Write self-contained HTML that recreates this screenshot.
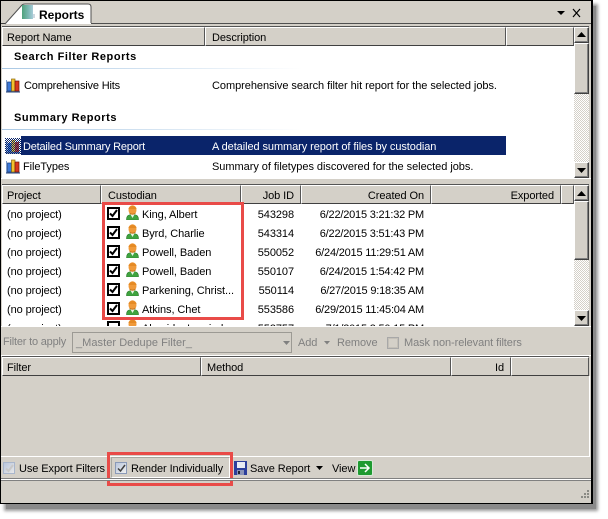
<!DOCTYPE html>
<html><head><meta charset="utf-8"><style>
html,body{margin:0;padding:0;width:608px;height:519px;overflow:hidden;background:#fff}
*{box-sizing:border-box}
body{font:11px/14px "Liberation Sans",sans-serif;color:#000;position:relative}
.a{position:absolute}
.t{position:absolute;white-space:nowrap;height:14px;margin-top:1px;letter-spacing:-.08px}
.r{text-align:right}
.d{letter-spacing:-.2px}
.b{font-weight:bold;letter-spacing:.55px}
.g{color:#808080}
.h{position:absolute;background:#d4d0c8;border-left:1px solid #fff;border-top:1px solid #fff;border-right:1px solid #555;border-bottom:1px solid #404040}
.track{background-color:#fff;background-image:conic-gradient(#d4d0c8 25%,#fff 0 50%,#d4d0c8 0 75%,#fff 0);background-size:2px 2px}
.btn{position:absolute;background:#d4d0c8;border-top:1px solid #fff;border-left:1px solid #fff;border-right:1px solid #404040;border-bottom:1px solid #404040;box-shadow:inset -1px -1px 0 #808080}
.cb{position:absolute;left:107px;width:13px;height:13px;border:2px solid #000;background:#fff}
</style></head><body>
<svg width="0" height="0" style="position:absolute"><defs>
<linearGradient id="bk" x1="0" x2="1" y1="0" y2="0"><stop offset="0" stop-color="#4fa27c"/><stop offset=".6" stop-color="#7db8b4"/><stop offset="1" stop-color="#a8ccd8"/></linearGradient>
<pattern id="dz" width="2" height="2" patternUnits="userSpaceOnUse"><rect width="1" height="1" fill="#0a246a"/><rect x="1" y="1" width="1" height="1" fill="#0a246a"/></pattern>
<symbol id="chart" viewBox="0 0 16 16"><path d="M1.500 3v11h13" fill="none" stroke="#7d9ccc"/><rect x="2.500" y="5" width="4" height="9" fill="#3b78d8" stroke="#123a80" stroke-width=".7"/><rect x="6.500" y="2" width="3.500" height="12" fill="#f2c22e" stroke="#8a6a10" stroke-width=".7"/><rect x="10" y="4" width="4" height="10" fill="#d8381e" stroke="#701808" stroke-width=".7"/><path d="M1 15h14" stroke="#22407a"/></symbol>
<symbol id="chartsel" viewBox="0 0 16 16"><path d="M1.500 3v11h13" fill="none" stroke="#7d9ccc"/><rect x="2.500" y="5" width="4" height="9" fill="#3b78d8"/><rect x="6.500" y="2" width="3.500" height="12" fill="#f2c22e"/><rect x="10" y="4" width="4" height="10" fill="#d8381e"/><path d="M1 15h14" stroke="#22407a"/><rect width="16" height="16" fill="url(#dz)"/></symbol>
<symbol id="p" viewBox="0 0 13 15"><path d="M.5 15c0-4 1.500-5.500 6-5.500s6 1.500 6 5.500z" fill="#3fa33f" stroke="#2a7a2a" stroke-width=".6"/><path d="M4.500 9.500h4l-2 3.500z" fill="#e8f4e8"/><ellipse cx="6.500" cy="5" rx="4" ry="4.800" fill="#f09a3a"/><path d="M2.500 4c0-3.800 8-3.800 8 0z" fill="#e58a24"/><path d="M3.500 8c1.500 1.500 4.500 1.500 6 0" fill="none" stroke="#c87820"/></symbol>
<symbol id="c" viewBox="0 0 9 9"><path d="M1 4.500l2.500 2.500 4.500-6" fill="none" stroke="#000" stroke-width="2"/></symbol>
</defs></svg>

<!-- shadow -->
<div class="a" style="left:6px;top:6px;width:590px;height:503px;background:#8a8a8a;box-shadow:0 0 3px 2px #9a9a9a"></div>
<!-- window -->
<div class="a" style="left:0;top:0;width:593px;height:504px;background:#d4d0c8;border:1px solid #000;border-width:1px 2px 1px 1px"></div>

<!-- tab -->
<svg class="a" style="left:0;top:0" width="100" height="26"><path d="M5 24L22 5Q23 4 25 4H88Q91 4 91 7V24z" fill="#fff"/><path d="M5 24L22 5Q23 4 25 4H88Q91 4 91 7V23" fill="none" stroke="#505050"/><rect x="22" y="5" width="11" height="14" fill="url(#bk)"/><rect x="33" y="14" width="2" height="4" fill="#cdd8e0"/></svg>
<div class="a" style="left:1px;top:23px;width:4px;height:1px;background:#404040"></div>
<div class="a" style="left:91px;top:23px;width:500px;height:1px;background:#505050"></div>
<div class="t b" style="left:39px;top:7px;font-size:12px;letter-spacing:0">Reports</div>
<svg class="a" style="left:556px;top:7px" width="28" height="12"><path d="M1 4h8L5 8z" fill="#000"/><path d="M17 2l7 8M24 2l-7 8" stroke="#000" stroke-width="1.200" fill="none"/></svg>

<!-- top pane -->
<div class="a" style="left:2px;top:26px;width:587px;height:1px;background:#555"></div>
<div class="h" style="left:2px;top:27px;width:203px;height:19px"></div>
<div class="h" style="left:205px;top:27px;width:301px;height:19px"></div>
<div class="h" style="left:506px;top:27px;width:68px;height:19px"></div>
<div class="t" style="left:7px;top:30px">Report Name</div>
<div class="t" style="left:212px;top:30px">Description</div>
<div class="a" style="left:2px;top:46px;width:572px;height:132px;background:#fff"></div>
<div class="t b" style="left:14px;top:49px;letter-spacing:.55px">Search Filter Reports</div>
<div class="a" style="left:2px;top:68px;width:300px;height:1px;background:linear-gradient(90deg,#a9c8e4,#fff)"></div>
<svg class="a" style="left:5px;top:77px" width="16" height="16"><use href="#chart"/></svg>
<div class="t" style="left:24px;top:78px;letter-spacing:-.17px">Comprehensive Hits</div>
<div class="t" style="left:212px;top:78px;letter-spacing:-.05px">Comprehensive search filter hit report for the selected jobs.</div>
<div class="t b" style="left:14px;top:110px;letter-spacing:.55px">Summary Reports</div>
<div class="a" style="left:2px;top:129px;width:300px;height:1px;background:linear-gradient(90deg,#a9c8e4,#fff)"></div>
<svg class="a" style="left:5px;top:138px" width="16" height="16"><use href="#chartsel"/></svg>
<div class="a" style="left:21px;top:136px;width:485px;height:19px;background:#0a246a"></div>
<div class="t" style="left:23px;top:139px;color:#fff;letter-spacing:-.2px">Detailed Summary Report</div>
<div class="t" style="left:212px;top:139px;color:#fff">A detailed summary report of files by custodian</div>
<svg class="a" style="left:5px;top:158px" width="16" height="16"><use href="#chart"/></svg>
<div class="t" style="left:23px;top:159px">FileTypes</div>
<div class="t" style="left:212px;top:159px;letter-spacing:-.04px">Summary of filetypes discovered for the selected jobs.</div>

<!-- top scrollbar -->
<div class="a track" style="left:574px;top:27px;width:15px;height:151px"></div>
<div class="btn" style="left:574px;top:27px;width:15px;height:16px"></div>
<svg class="a" style="left:577px;top:32px" width="9" height="5"><path d="M4.500 0L9 5H0z" fill="#000"/></svg>
<div class="btn" style="left:574px;top:43px;width:15px;height:51px"></div>
<div class="btn" style="left:574px;top:162px;width:15px;height:16px"></div>
<svg class="a" style="left:577px;top:168px" width="9" height="5"><path d="M0 0h9L4.500 5z" fill="#000"/></svg>

<div class="a" style="left:1px;top:178px;width:590px;height:1px;background:#fff"></div>
<div class="a" style="left:2px;top:184px;width:587px;height:1px;background:#555"></div>

<!-- middle pane -->
<div class="h" style="left:2px;top:185px;width:99px;height:19px"></div>
<div class="h" style="left:101px;top:185px;width:140px;height:19px"></div>
<div class="h" style="left:241px;top:185px;width:60px;height:19px"></div>
<div class="h" style="left:301px;top:185px;width:130px;height:19px"></div>
<div class="h" style="left:431px;top:185px;width:130px;height:19px"></div>
<div class="h" style="left:561px;top:185px;width:13px;height:19px"></div>
<div class="t" style="left:7px;top:188px">Project</div>
<div class="t" style="left:108px;top:188px">Custodian</div>
<div class="t r" style="right:314px;top:188px">Job ID</div>
<div class="t r" style="right:184px;top:188px">Created On</div>
<div class="t r" style="right:54px;top:188px">Exported</div>
<div class="a" style="left:2px;top:204px;width:572px;height:122px;background:#fff;overflow:hidden" id="m">
 <div class="t" style="left:5px;top:3px">(no project)</div><div class="t" style="left:5px;top:22px">(no project)</div><div class="t" style="left:5px;top:41px">(no project)</div><div class="t" style="left:5px;top:60px">(no project)</div><div class="t" style="left:5px;top:79px">(no project)</div><div class="t" style="left:5px;top:98px">(no project)</div><div class="t" style="left:5px;top:117px">(no project)</div>
 <div class="t" style="left:140px;top:3px">King, Albert</div><div class="t" style="left:140px;top:22px">Byrd, Charlie</div><div class="t" style="left:140px;top:41px">Powell, Baden</div><div class="t" style="left:140px;top:60px">Powell, Baden</div><div class="t" style="left:140px;top:79px">Parkening, Christ...</div><div class="t" style="left:140px;top:98px">Atkins, Chet</div><div class="t" style="left:140px;top:117px">Almeida, Laurindo</div>
 <div class="t r" style="right:280px;top:3px">543298</div><div class="t r" style="right:280px;top:22px">543314</div><div class="t r" style="right:280px;top:41px">550052</div><div class="t r" style="right:280px;top:60px">550107</div><div class="t r" style="right:280px;top:79px">550114</div><div class="t r" style="right:280px;top:98px">553586</div><div class="t r" style="right:280px;top:117px">553757</div>
 <div class="t r d" style="right:150px;top:3px">6/22/2015 3:21:32 PM</div><div class="t r d" style="right:150px;top:22px">6/22/2015 3:51:43 PM</div><div class="t r d" style="right:150px;top:41px">6/24/2015 11:29:51 AM</div><div class="t r d" style="right:150px;top:60px">6/24/2015 1:54:42 PM</div><div class="t r d" style="right:150px;top:79px">6/27/2015 9:18:35 AM</div><div class="t r d" style="right:150px;top:98px">6/29/2015 11:45:04 AM</div><div class="t r d" style="right:150px;top:117px">7/1/2015 3:50:15 PM</div>
</div>
<div class="cb" style="top:207px"><svg class="a" style="left:0;top:0" width="9" height="9"><use href="#c"/></svg></div>
<div class="cb" style="top:226px"><svg class="a" style="left:0;top:0" width="9" height="9"><use href="#c"/></svg></div>
<div class="cb" style="top:245px"><svg class="a" style="left:0;top:0" width="9" height="9"><use href="#c"/></svg></div>
<div class="cb" style="top:264px"><svg class="a" style="left:0;top:0" width="9" height="9"><use href="#c"/></svg></div>
<div class="cb" style="top:283px"><svg class="a" style="left:0;top:0" width="9" height="9"><use href="#c"/></svg></div>
<div class="cb" style="top:302px"><svg class="a" style="left:0;top:0" width="9" height="9"><use href="#c"/></svg></div>
<div class="a" style="left:107px;top:321px;width:13px;height:5px;border:2px solid #000;border-bottom:0;background:#fff"></div>
<svg class="a" style="left:126px;top:205px" width="13" height="15"><use href="#p"/></svg>
<svg class="a" style="left:126px;top:224px" width="13" height="15"><use href="#p"/></svg>
<svg class="a" style="left:126px;top:243px" width="13" height="15"><use href="#p"/></svg>
<svg class="a" style="left:126px;top:262px" width="13" height="15"><use href="#p"/></svg>
<svg class="a" style="left:126px;top:281px" width="13" height="15"><use href="#p"/></svg>
<svg class="a" style="left:126px;top:300px" width="13" height="15"><use href="#p"/></svg>
<div class="a" style="left:126px;top:319px;width:13px;height:7px;overflow:hidden"><svg width="13" height="15"><use href="#p"/></svg></div>
<!-- red box -->
<div class="a" style="left:102px;top:202px;width:142px;height:118px;border:3px solid #e94b48"></div>

<!-- middle scrollbar -->
<div class="a track" style="left:574px;top:185px;width:15px;height:141px"></div>
<div class="btn" style="left:574px;top:185px;width:15px;height:16px"></div>
<svg class="a" style="left:577px;top:191px" width="9" height="5"><path d="M4.500 0L9 5H0z" fill="#000"/></svg>
<div class="btn" style="left:574px;top:201px;width:15px;height:59px"></div>
<div class="btn" style="left:574px;top:310px;width:15px;height:16px"></div>
<svg class="a" style="left:577px;top:316px" width="9" height="5"><path d="M0 0h9L4.500 5z" fill="#000"/></svg>
<div class="a" style="left:1px;top:326px;width:590px;height:1px;background:#fff"></div>

<!-- filter toolbar -->
<div class="t g" style="left:3px;top:334px;letter-spacing:-.2px">Filter to apply</div>
<div class="a" style="left:72px;top:332px;width:220px;height:21px;border:1px solid #9c9a94"></div>
<div class="t g" style="left:76px;top:335px;letter-spacing:.05px">_Master Dedupe Filter_</div>
<svg class="a" style="left:283px;top:341px" width="8" height="5"><path d="M0 0h7L3.500 4z" fill="#808080"/></svg>
<div class="t g" style="left:298px;top:335px">Add</div>
<svg class="a" style="left:324px;top:341px" width="7" height="4"><path d="M0 0h6L3 3.500z" fill="#808080"/></svg>
<div class="t g" style="left:337px;top:335px">Remove</div>
<div class="a" style="left:387px;top:337px;width:12px;height:12px;background:#d4d0c8;border:1px solid #a8a8a8;box-shadow:inset 0 0 0 1px #c4c0b8"></div>
<div class="t g" style="left:404px;top:335px">Mask non-relevant filters</div>

<!-- bottom pane -->
<div class="a" style="left:1px;top:355px;width:590px;height:1px;background:#fff"></div>
<div class="a" style="left:2px;top:356px;width:587px;height:1px;background:#555"></div>
<div class="h" style="left:2px;top:357px;width:199px;height:19px"></div>
<div class="h" style="left:201px;top:357px;width:250px;height:19px"></div>
<div class="h" style="left:451px;top:357px;width:60px;height:19px"></div>
<div class="h" style="left:511px;top:357px;width:78px;height:19px"></div>
<div class="t" style="left:7px;top:360px">Filter</div>
<div class="t" style="left:207px;top:360px">Method</div>
<div class="t r" style="right:104px;top:360px">Id</div>
<div class="a" style="left:1px;top:456px;width:589px;height:1px;background:#fff"></div>
<div class="a" style="left:589px;top:376px;width:1px;height:81px;background:#fff"></div>

<!-- bottom toolbar -->
<div class="a" style="left:3px;top:462px;width:12px;height:12px;background:linear-gradient(135deg,#b9c6dc,#e8e8e8);border:1px solid #a9b6cc"></div>
<svg class="a" style="left:5px;top:464px" width="9" height="9"><path d="M1 4.500l2.500 2.500 4.500-6" fill="none" stroke="#c8c8c8" stroke-width="2"/></svg>
<div class="t" style="left:19px;top:461px;letter-spacing:-.08px">Use Export Filters</div>
<div class="a" style="left:111px;top:457px;width:119px;height:21px;border:1px solid #a8a8a0;border-right-color:#fff;border-bottom-color:#fff"></div>
<div class="a" style="left:115px;top:462px;width:12px;height:12px;background:linear-gradient(135deg,#b9c6dc,#f0f0f0);border:1px solid #8a9ab8"></div>
<svg class="a" style="left:117px;top:464px" width="9" height="9"><path d="M1 4.500l2.500 2.500 4.500-6" fill="none" stroke="#404040" stroke-width="1.500"/></svg>
<div class="t" style="left:131px;top:461px">Render Individually</div>
<div class="a" style="left:107px;top:452px;width:126px;height:34px;border:3px solid #e94b48"></div>
<svg class="a" style="left:234px;top:461px" width="13" height="14"><rect width="13" height="14" fill="#2c3f9c"/><rect x="3" y="1" width="8" height="6" fill="#e8ecf4"/><rect x="3" y="9" width="7" height="5" fill="#8a94b8"/><rect x="4" y="10" width="2" height="3" fill="#223"/></svg>
<div class="t" style="left:250px;top:461px">Save Report</div>
<svg class="a" style="left:316px;top:466px" width="7" height="4"><path d="M0 0h7L3.500 4z" fill="#000"/></svg>
<div class="t" style="left:332px;top:461px">View</div>
<svg class="a" style="left:357px;top:460px" width="16" height="16"><rect x=".5" y=".5" width="15" height="15" rx="1.500" fill="#1e9a30" stroke="#d8e8d8"/><path d="M3 8h9M8 4l4 4-4 4" fill="none" stroke="#fff" stroke-width="1.500"/></svg>

<div class="a" style="left:1px;top:478px;width:590px;height:1px;background:#808080"></div>
<div class="a" style="left:1px;top:479px;width:590px;height:1px;background:#fff"></div>
<div class="a" style="left:1px;top:480px;width:590px;height:1px;background:#808080"></div>

<svg class="a" style="left:578px;top:489px" width="12" height="12" fill="#8a8a84"><rect x="9" y="1" width="2" height="2"/><rect x="6" y="4" width="2" height="2"/><rect x="9" y="4" width="2" height="2"/><rect x="3" y="7" width="2" height="2"/><rect x="6" y="7" width="2" height="2"/><rect x="9" y="7" width="2" height="2"/></svg>
</body></html>
